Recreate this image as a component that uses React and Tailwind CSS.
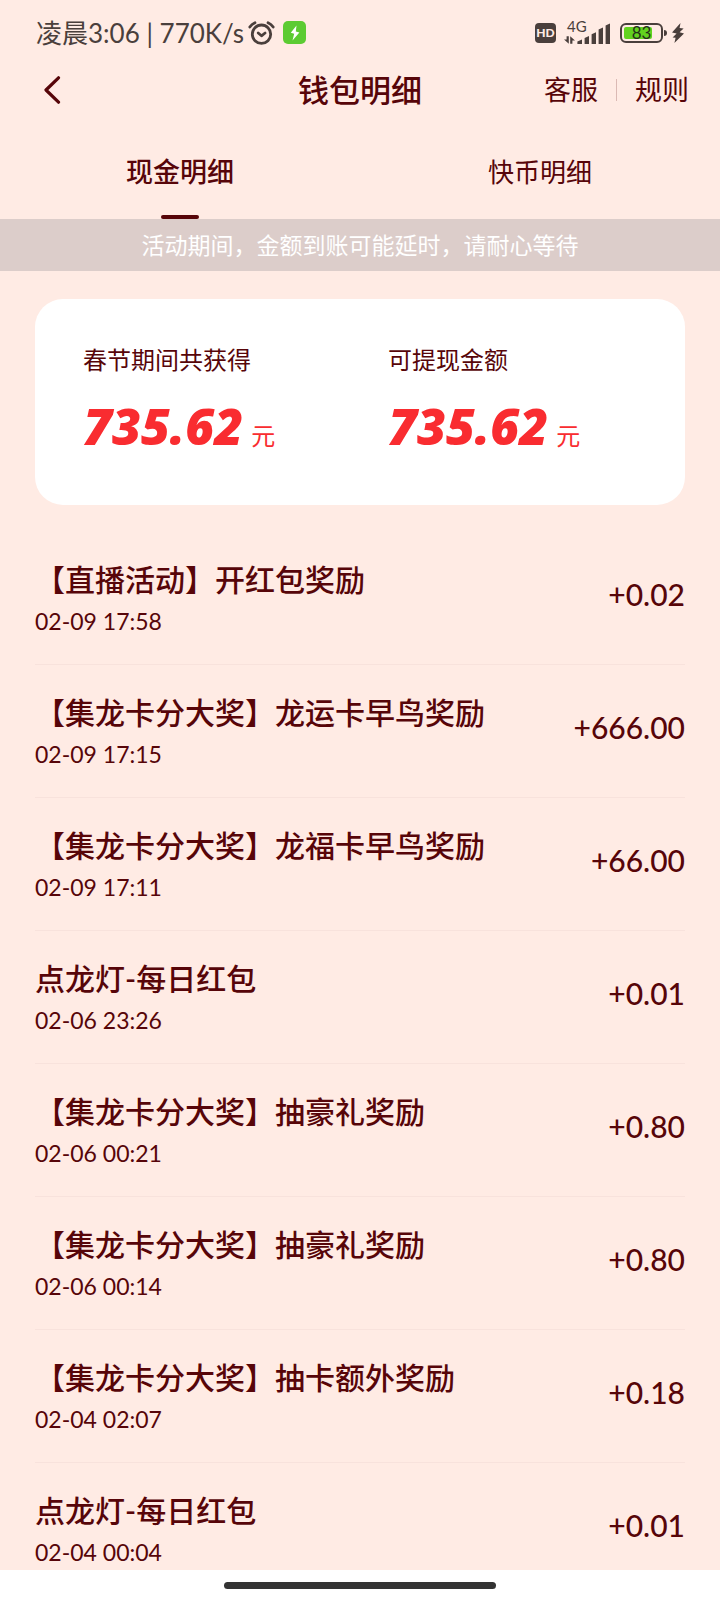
const records = [
  { title: '【直播活动】开红包奖励', time: '02-09 17:58', amount: '+0.02' },
  { title: '【集龙卡分大奖】龙运卡早鸟奖励', time: '02-09 17:15', amount: '+666.00' },
  { title: '【集龙卡分大奖】龙福卡早鸟奖励', time: '02-09 17:11', amount: '+66.00' },
  { title: '点龙灯-每日红包', time: '02-06 23:26', amount: '+0.01' },
  { title: '【集龙卡分大奖】抽豪礼奖励', time: '02-06 00:21', amount: '+0.80' },
  { title: '【集龙卡分大奖】抽豪礼奖励', time: '02-06 00:14', amount: '+0.80' },
  { title: '【集龙卡分大奖】抽卡额外奖励', time: '02-04 02:07', amount: '+0.18' },
  { title: '点龙灯-每日红包', time: '02-04 00:04', amount: '+0.01' },
]

const balances = [
  { label: '春节期间共获得', value: '735.62' },
  { label: '可提现金额', value: '735.62' },
]

function AlarmIcon() {
  return (
    <svg className="w-[27px] h-6" viewBox="0 0 27 24" fill="none" stroke="currentColor" strokeWidth="2.8" strokeLinecap="round" strokeLinejoin="round">
      <circle cx="13.5" cy="13.2" r="9.2" />
      <path d="M10.2 12l3.3 2.8 3.6-2.8" />
      <path d="M1.8 6C3.2 4 5 2.6 7 1.7" />
      <path d="M25.2 6C23.8 4 22 2.6 20 1.7" />
    </svg>
  )
}

function ChargeBadge() {
  return (
    <span className="w-[23px] h-[23px] rounded-[5px] bg-[#5ccb32] text-white flex items-center justify-center">
      <svg className="w-3 h-4" viewBox="0 0 12 16" fill="currentColor">
        <path d="M7.5 0.5L1.8 7.8L5.2 8.8L3.5 15.5L10.4 7.6L6.8 6.6Z" />
      </svg>
    </span>
  )
}

function SignalIcon() {
  return (
    <div className="relative w-[46px] h-6">
      <span className="absolute left-[3px] top-0 text-[15px] leading-[11px]">4G</span>
      <svg className="w-full h-full" viewBox="0 0 46 24" fill="currentColor">
        <path d="M2.6 15.2h2.2v7.6L0 18.6h2.6zM6.2 22.8v-7.6l4.8 4.2H8.4v3.4z" />
        <path d="M13.4 20.4l4.6-1.8V23h-4.6z" />
        <path d="M20.6 17l4.4-2V23h-4.4z" />
        <path d="M27.6 13.2l4.4-2V23h-4.4z" />
        <path d="M34.6 8.6l4.4-2V23h-4.4z" />
        <path d="M41.6 4.4l4.4-2V23h-4.4z" />
      </svg>
    </div>
  )
}

function Battery() {
  return (
    <div className="flex items-center">
      <div className="relative w-[43px] h-5 rounded-md border-2 border-current p-[2px]">
        <div className="w-7 h-full rounded-xs bg-[#63d31f]" />
        <span className="absolute inset-0 text-center text-[17px] leading-4 text-[#24301a]">83</span>
      </div>
      <div className="w-[3px] h-[6px] ml-px rounded-r bg-current" />
    </div>
  )
}

function StatusBar() {
  return (
    <div className="flex items-center justify-between h-[65px] pl-9 pr-[35px] text-[#4a3f3c]">
      <div className="flex items-center">
        <span className="text-[26px] leading-8">凌晨3:06 | 770K/s</span>
        <div className="flex items-center gap-2 ml-1">
          <AlarmIcon />
          <ChargeBadge />
        </div>
      </div>
      <div className="flex items-center">
        <span className="w-[21px] h-5 rounded bg-[#4a3f3c] text-[#ffebe4] text-[12px] leading-5 font-black text-center">HD</span>
        <div className="ml-2">
          <SignalIcon />
        </div>
        <div className="ml-[10px]">
          <Battery />
        </div>
        <svg className="w-[14px] h-5 ml-1" viewBox="0 0 14 20" fill="currentColor">
          <path d="M9.5 0L1 9.4L5.6 10.6L1.6 14.4L4.6 14.8L3.4 20L13 10.6L8.6 9.2L12.6 5.4L8.6 5Z" />
        </svg>
      </div>
    </div>
  )
}

function NavBar() {
  return (
    <header className="grid grid-cols-3 items-center h-[50px] px-[31px]">
      <button aria-label="返回" className="flex items-center justify-center w-[42px] h-11">
        <svg className="w-[18px] h-7" viewBox="0 0 18 28" fill="none" stroke="currentColor" strokeWidth="3.2" strokeLinecap="round" strokeLinejoin="round">
          <path d="M15.5 1.8L3 14L15.5 26.2" />
        </svg>
      </button>
      <h1 className="text-[31px] leading-[44px] font-medium text-center">钱包明细</h1>
      <div className="flex items-center justify-end gap-[18px] text-[27px] leading-10">
        <a href="#service">客服</a>
        <span className="w-px h-[22px] bg-[#dbb9b4]" />
        <a href="#rules">规则</a>
      </div>
    </header>
  )
}

function Tabs() {
  return (
    <div role="tablist" className="grid grid-cols-2 h-[104px]">
      <button role="tab" aria-selected="true" className="relative h-full pt-[10px] text-[27px] font-medium">
        现金明细
        <span className="absolute bottom-0 left-1/2 -translate-x-1/2 w-[38px] h-1 rounded-full bg-[#570509]" />
      </button>
      <button role="tab" aria-selected="false" className="h-full pt-[10px] text-[26px]">
        快币明细
      </button>
    </div>
  )
}

function BalanceCard() {
  return (
    <section className="grid grid-cols-2 gap-2 mx-[35px] mt-7 h-[206px] pl-12 pt-[41px] rounded-[28px] bg-white">
      {balances.map((item) => (
        <div key={item.label}>
          <p className="text-[24px] leading-10">{item.label}</p>
          <p className="flex items-baseline gap-2 mt-4 text-[#f92c30]">
            <span className="font-['Open_Sans'] text-[50px] leading-[60px] font-extrabold italic">{item.value}</span>
            <span className="text-[24px]">元</span>
          </p>
        </div>
      ))}
    </section>
  )
}

function RecordRow({ title, time, amount }) {
  return (
    <li className="flex items-center justify-between pt-[21px] pb-[29px] border-b border-[#f8e2dc]">
      <div>
        <p className="text-[30px] leading-[52px] font-medium">{title}</p>
        <p className="mt-[2px] text-[23px] leading-7">{time}</p>
      </div>
      <span className="text-[30px] leading-10 font-medium">{amount}</span>
    </li>
  )
}

export default function App() {
  return (
    <div className="flex flex-col h-screen bg-[#ffebe4] text-[#570509] font-['Lato','Noto_Sans_CJK_SC',sans-serif]">
      <StatusBar />
      <NavBar />
      <Tabs />
      <p className="bg-[#dccdca] text-white text-[23px] leading-[52px] text-center">
        活动期间，金额到账可能延时，请耐心等待
      </p>
      <main className="flex-1 min-h-0 overflow-y-auto [scrollbar-width:none]">
        <BalanceCard />
        <ul className="mt-[27px] px-[35px]">
          {records.map((record) => (
            <RecordRow key={record.time} {...record} />
          ))}
        </ul>
      </main>
      <footer className="flex justify-center h-[30px] pt-3 bg-white">
        <div className="w-[272px] h-[7px] rounded-full bg-[#333333]" />
      </footer>
    </div>
  )
}
